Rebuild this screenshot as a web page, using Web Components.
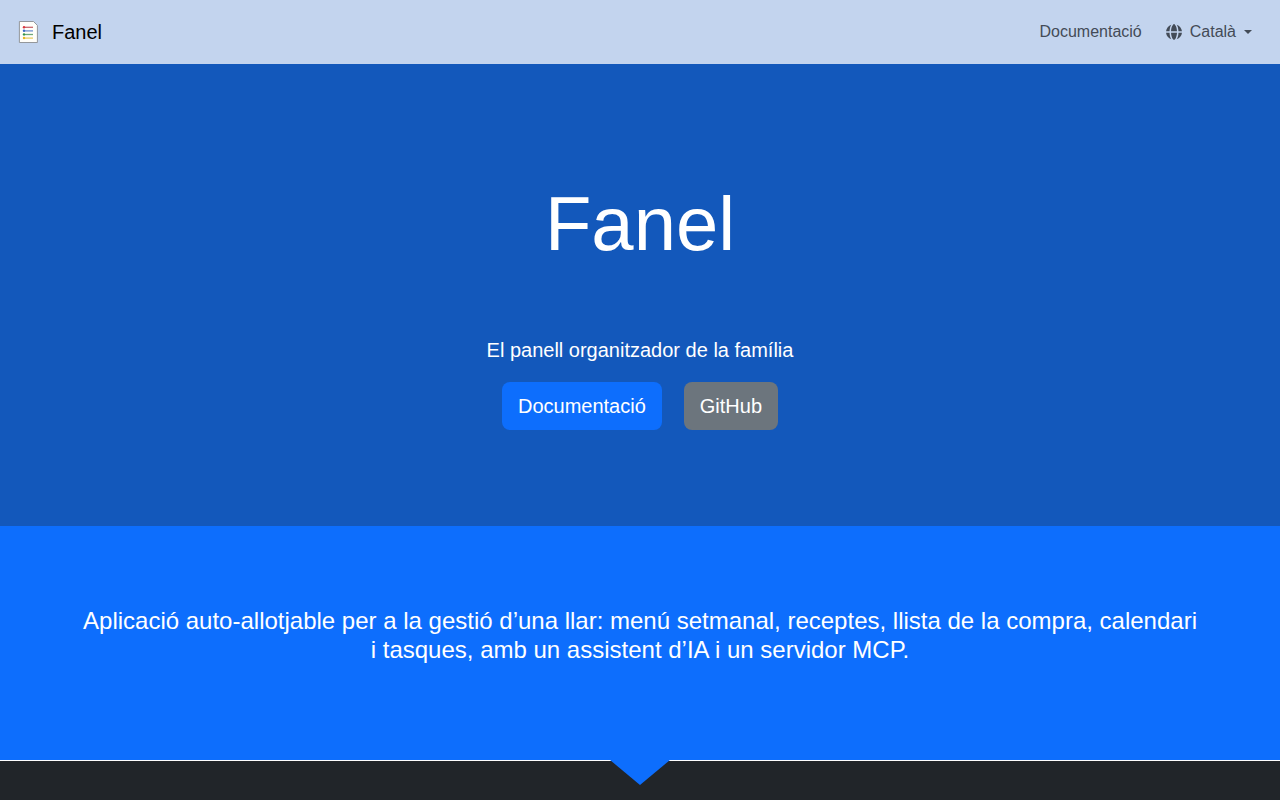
<!DOCTYPE html>
<html lang="ca">
<head>
<meta charset="utf-8">
<meta name="viewport" content="width=device-width, initial-scale=1">
<title>Fanel</title>
<style>
    body {
        margin:0;
        background:#212529;
        font-family:"Liberation Sans", Arial, sans-serif;
        font-size:16px;
        line-height:24px;
    }
</style>
</head>
<body>

<nav-bar>
    <fanel-logo slot="logo"></fanel-logo>
    <span slot="brand">Fanel</span>
    <nav-link href="#docs">Documentació</nav-link>
    <lang-menu>Català</lang-menu>
</nav-bar>
<main>
    <cover-block>
        <span slot="title">Fanel</span>
        <span slot="lead">El panell organitzador de la família</span>
        <cover-button href="#docs">Documentació</cover-button>
        <cover-button href="#github" kind="secondary">GitHub</cover-button>
    </cover-block>
    <lead-block>Aplicació auto-allotjable per a la gestió d’una llar: menú setmanal, receptes, llista de la compra, calendari i tasques, amb un assistent d’IA i un servidor MCP.</lead-block>
    <feature-block></feature-block>
</main>

<script>
//base class: clones the markup into an open shadow root
class BaseElement extends HTMLElement {
    constructor(){
        super();
        const template = document.createElement("template");
        template.innerHTML = this.constructor.markup;
        this.attachShadow({mode:"open"}).appendChild(template.content.cloneNode(true));
    }
}

//sheet of paper with a coloured list
class FanelLogo extends BaseElement {
    static markup = `
<style>
    :host { display:block; width:24px; height:24px; }
    svg { display:block; }
</style>
<svg width="24" height="24" viewBox="0 0 24 24" aria-hidden="true">
    <path d="M3.400 1.500H17.500L21.400 5.400V22.500H3.400Z" fill="#fffefa" stroke="#8b8d91" stroke-width="0.900"/>
    <g stroke-width="1.300">
        <path d="M8.500 7.300H17" stroke="#c9666c"/>
        <path d="M8.500 10.900H17" stroke="#6f8fcf"/>
        <path d="M8.500 14.500H17" stroke="#6ea87a"/>
        <path d="M8.500 18.100H17" stroke="#eacb65"/>
    </g>
    <circle cx="8" cy="7.200" r="1.200" fill="#d9363e"/>
    <circle cx="8" cy="10.800" r="1.200" fill="#3c6ac4"/>
    <circle cx="8" cy="14.400" r="1.200" fill="#349348"/>
    <circle cx="8" cy="18" r="1.200" fill="#e8b51f"/>
</svg>
`;
}

class NavBar extends BaseElement {
    static markup = `
<style>
    :host { display:block; background:#c3d4ee; }
    nav {
        display:flex;
        align-items:center;
        justify-content:space-between;
        box-sizing:border-box;
        min-height:64px;
        padding:0 20px 0 16px;
    }
    .brand {
        display:flex;
        align-items:center;
        gap:12px;
        color:#000;
        font-size:20px;
        text-decoration:none;
    }
    .links { display:flex; align-items:center; gap:8px; }
</style>
<nav>
    <a class="brand" href="#"><slot name="logo"></slot><slot name="brand"></slot></a>
    <div class="links"><slot></slot></div>
</nav>
`;
}

class NavLink extends BaseElement {
    static markup = `
<style>
    :host { display:block; }
    a { display:block; padding:8px; color:#434b57; text-decoration:none; }
</style>
<a><slot></slot></a>
`;

    connectedCallback(){
        this.shadowRoot.querySelector("a").href = this.getAttribute("href");
    }
}

class LangMenu extends BaseElement {
    static markup = `
<style>
    :host { display:block; }
    button {
        display:flex;
        align-items:center;
        gap:8px;
        padding:8px;
        border:0;
        background:none;
        color:#434b57;
        font:inherit;
        cursor:pointer;
    }
    .caret {
        border-top:4px solid;
        border-left:4px solid transparent;
        border-right:4px solid transparent;
    }
</style>
<button type="button" aria-haspopup="true">
    <svg width="16" height="16" viewBox="0 0 512 512" fill="currentColor" aria-hidden="true">
        <path d="M351.900 280l-190.900 0c2.900 64.500 17.200 123.900 37.500 167.400 11.400 24.500 23.700 41.800 35.100 52.400 11.200 10.500 18.900 12.200 22.900 12.200s11.700-1.700 22.900-12.200c11.400-10.600 23.700-28 35.100-52.400 20.300-43.500 34.600-102.900 37.500-167.400z"/>
        <path d="M160.900 232l190.900 0C349 167.500 334.700 108.100 314.400 64.600 303 40.200 290.700 22.800 279.300 12.200 268.100 1.700 260.400 0 256.400 0s-11.700 1.700-22.900 12.200c-11.400 10.600-23.700 28-35.100 52.400-20.300 43.500-34.600 102.900-37.500 167.400z"/>
        <path d="M112.900 232C116.400 146.600 137.900 70.900 169.700 21.600 78.700 53.800 11.900 135.200 1.500 232l111.400 0zM1.500 280C11.900 376.800 78.700 458.200 169.700 490.400 137.900 441.100 116.400 365.400 112.900 280L1.500 280z"/>
        <path d="M399.900 280c-3.500 85.400-25 161.100-56.800 210.400 91-32.200 157.800-113.600 168.200-210.400l-111.400 0zM511.300 232C500.900 135.200 434.100 53.800 343.100 21.600 374.900 70.900 396.400 146.600 399.900 232l111.400 0z"/>
    </svg>
    <slot></slot>
    <span class="caret"></span>
</button>
`;
}

class CoverBlock extends BaseElement {
    static markup = `
<style>
    :host {
        display:block;
        padding:112px 16px 96px;
        background:#1358bb;
        color:#fff;
        text-align:center;
    }
    h1 { margin:0 0 62px; font-size:76px; font-weight:400; line-height:96px; }
    p { margin:0 0 16px; font-size:20px; line-height:32px; }
    .buttons { display:flex; justify-content:center; gap:22px; }
</style>
<section>
    <h1><slot name="title"></slot></h1>
    <p><slot name="lead"></slot></p>
    <div class="buttons"><slot></slot></div>
</section>
`;
}

class CoverButton extends BaseElement {
    static markup = `
<style>
    :host { display:block; }
    a {
        display:block;
        padding:9px 16px;
        border-radius:8px;
        background:#0d6efd;
        color:#fff;
        font-size:20px;
        line-height:30px;
        text-decoration:none;
    }
    :host([kind="secondary"]) a { background:#6c757d; }
</style>
<a><slot></slot></a>
`;

    connectedCallback(){
        this.shadowRoot.querySelector("a").href = this.getAttribute("href");
    }
}

class LeadBlock extends BaseElement {
    static markup = `
<style>
    :host {
        display:block;
        position:relative;
        padding:80px 16px 96px;
        background:#0d6efd;
        color:#fff;
        text-align:center;
    }
    p { max-width:1116px; margin:0 auto; font-size:24px; line-height:29px; }
    /* arrow that hangs over the next block */
    .arrow {
        position:absolute;
        top:100%;
        left:50%;
        margin-left:-30px;
        border-top:25px solid #0d6efd;
        border-left:30px solid transparent;
        border-right:30px solid transparent;
    }
</style>
<section>
    <p><slot></slot></p>
    <div class="arrow"></div>
</section>
`;
}

class FeatureBlock extends BaseElement {
    static markup = `
<style>
    :host { display:block; min-height:39px; border-top:1px solid #fff; background:#212529; }
</style>
<slot></slot>
`;
}

customElements.define("fanel-logo", FanelLogo);
customElements.define("nav-bar", NavBar);
customElements.define("nav-link", NavLink);
customElements.define("lang-menu", LangMenu);
customElements.define("cover-block", CoverBlock);
customElements.define("cover-button", CoverButton);
customElements.define("lead-block", LeadBlock);
customElements.define("feature-block", FeatureBlock);
</script>
</body>
</html>
